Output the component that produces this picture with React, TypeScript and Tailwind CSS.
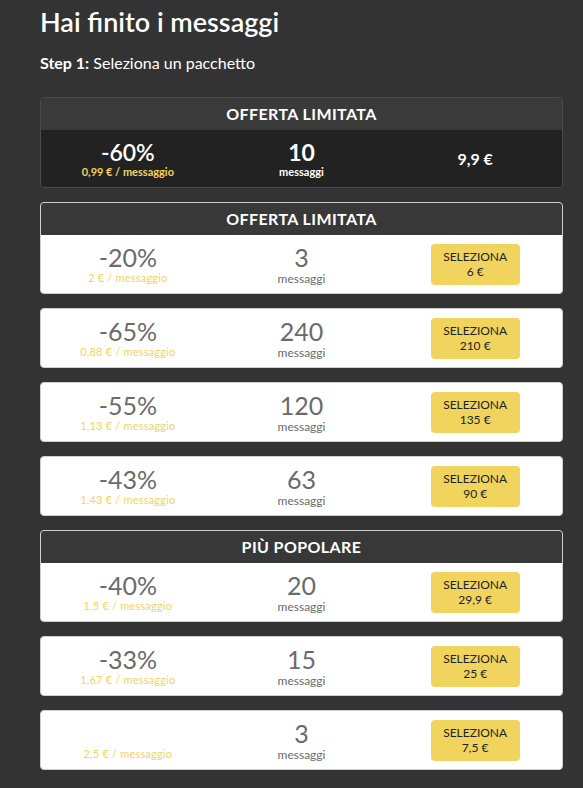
import React from 'react'

interface Pack {
  discount?: string
  perMessage: string
  count: string
  price: string
  label?: string
}

const packs: Pack[] = [
  { discount: '-20%', perMessage: '2 € / messaggio', count: '3', price: '6 €', label: 'OFFERTA LIMITATA' },
  { discount: '-65%', perMessage: '0,88 € / messaggio', count: '240', price: '210 €' },
  { discount: '-55%', perMessage: '1,13 € / messaggio', count: '120', price: '135 €' },
  { discount: '-43%', perMessage: '1,43 € / messaggio', count: '63', price: '90 €' },
  { discount: '-40%', perMessage: '1,5 € / messaggio', count: '20', price: '29,9 €', label: 'PIÙ POPOLARE' },
  { discount: '-33%', perMessage: '1,67 € / messaggio', count: '15', price: '25 €' },
  { perMessage: '2,5 € / messaggio', count: '3', price: '7,5 €' },
]

const PackCard = ({ pack }: { pack: Pack }) => (
  <div className="rounded-[4px] border border-[#cfcfcf] overflow-hidden bg-white">
    {pack.label && (
      <div className="h-[32px] bg-[#383838] flex items-center justify-center text-white font-bold text-[16px] tracking-[0.4px]">
        {pack.label}
      </div>
    )}
    <div className="h-[58px] grid grid-cols-3 items-center">
      {/* Discount */}
      <div className="flex flex-col items-center justify-end h-full pb-[8px]">
        {pack.discount && (
          <span className="text-[25px] leading-[28px] text-[#6b6b6b]">{pack.discount}</span>
        )}
        <span className="text-[11px] leading-[14px] text-[#f0d45e] tracking-[0.2px]">{pack.perMessage}</span>
      </div>
      {/* Count */}
      <div className="flex flex-col items-center justify-end h-full pb-[7px]">
        <span className="text-[25px] leading-[28px] text-[#6b6b6b]">{pack.count}</span>
        <span className="mt-[1px] text-[12px] leading-[14px] text-[#6b6b6b]">messaggi</span>
      </div>
      {/* Button */}
      <div className="flex justify-center">
        <button className="w-[89px] h-[41px] rounded-[4px] bg-[#f0d45e] text-[#222222] text-[12px] leading-[15px] flex flex-col items-center justify-center">
          <span>SELEZIONA</span>
          <span>{pack.price}</span>
        </button>
      </div>
    </div>
  </div>
)

export default function App() {
  return (
    <div className="min-h-screen bg-[#333333] pl-10 pr-5 pb-6" style={{ fontFamily: 'Lato, "Open Sans", sans-serif' }}>
      <h1 className="pt-[4px] text-[27px] leading-[36px] font-semibold text-white">Hai finito i messaggi</h1>
      <p className="mt-[13px] text-[16px] leading-[20px] text-white">
        <span className="font-bold">Step 1:</span> Seleziona un pacchetto
      </p>

      <div className="mt-[24px] flex flex-col gap-[14px]">
        {/* Featured offer */}
        <div className="rounded-[4px] border border-[#4a4a4a] overflow-hidden">
          <div className="h-[32px] bg-[#3a3a3a] flex items-center justify-center text-white font-bold text-[16px] tracking-[0.4px]">
            OFFERTA LIMITATA
          </div>
          <div className="h-[57px] bg-[#222222] grid grid-cols-3 items-center">
            <div className="flex flex-col items-center">
              <span className="text-[23px] leading-[26px] text-white font-semibold">-60%</span>
              <span className="text-[11px] leading-[14px] text-[#f0d45e] font-bold">0,99 € / messaggio</span>
            </div>
            <div className="flex flex-col items-center">
              <span className="text-[23px] leading-[26px] text-white font-bold">10</span>
              <span className="text-[11px] leading-[14px] text-white font-bold">messaggi</span>
            </div>
            <div className="flex justify-center">
              <span className="text-[16px] text-white font-bold">9,9 €</span>
            </div>
          </div>
        </div>

        {packs.map((p, i) => (
          <PackCard key={i} pack={p} />
        ))}
      </div>
    </div>
  )
}
